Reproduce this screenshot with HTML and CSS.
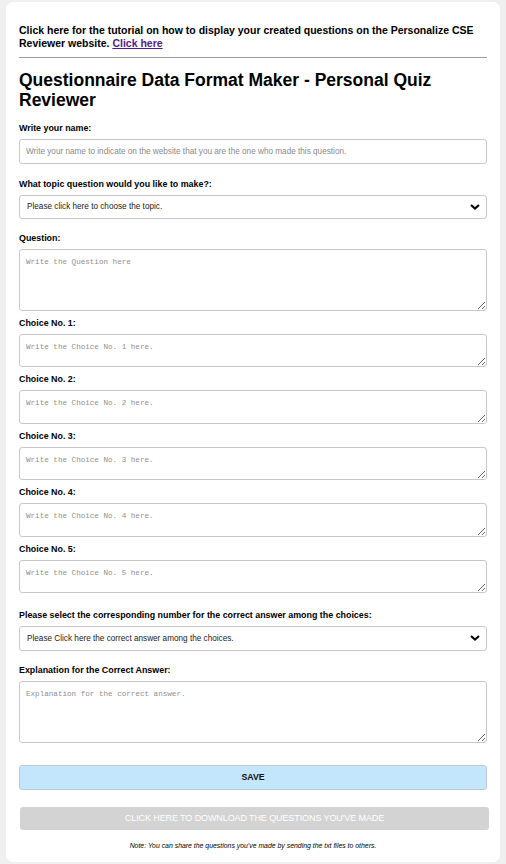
FILE: index.html
```html
<!DOCTYPE html>
<html lang="en">
<head>
<meta charset="utf-8">
<title>Questionnaire Data Format Maker</title>
<link rel="stylesheet" href="styles.css">
</head>
<body>
<main class="card">
  <p class="intro">Click here for the tutorial on how to display your created questions on the Personalize CSE Reviewer website. <a class="intro-link" href="#">Click here</a></p>
  <hr class="rule">
  <h1 class="title">Questionnaire Data Format Maker - Personal Quiz Reviewer</h1>

  <form class="form">
    <label class="label" for="name">Write your name:</label>
    <input class="input" id="name" type="text" placeholder="Write your name to indicate on the website that you are the one who made this question.">

    <label class="label gap-lg" for="topic">What topic question would you like to make?:</label>
    <div class="select-wrap">
      <select class="select" id="topic"><option>Please click here to choose the topic.</option></select>
      <svg class="chev" width="10" height="6" viewBox="0 0 10 6"><path d="M1 1 L5 4.6 L9 1" fill="none" stroke="#000" stroke-width="2"/></svg>
    </div>

    <label class="label gap-md" for="q">Question:</label>
    <textarea class="area area-lg" id="q" placeholder="Write the Question here"></textarea>

    <label class="label gap-sm" for="c1">Choice No. 1:</label>
    <textarea class="area area-sm" id="c1" placeholder="Write the Choice No. 1 here."></textarea>
    <label class="label gap-sm" for="c2">Choice No. 2:</label>
    <textarea class="area area-sm" id="c2" placeholder="Write the Choice No. 2 here."></textarea>
    <label class="label gap-sm" for="c3">Choice No. 3:</label>
    <textarea class="area area-sm" id="c3" placeholder="Write the Choice No. 3 here."></textarea>
    <label class="label gap-sm" for="c4">Choice No. 4:</label>
    <textarea class="area area-sm" id="c4" placeholder="Write the Choice No. 4 here."></textarea>
    <label class="label gap-sm" for="c5">Choice No. 5:</label>
    <textarea class="area area-sm" id="c5" placeholder="Write the Choice No. 5 here."></textarea>

    <label class="label gap-xl" for="ans">Please select the corresponding number for the correct answer among the choices:</label>
    <div class="select-wrap">
      <select class="select select-b" id="ans"><option>Please Click here the correct answer among the choices.</option></select>
      <svg class="chev" width="10" height="6" viewBox="0 0 10 6"><path d="M1 1 L5 4.6 L9 1" fill="none" stroke="#000" stroke-width="2"/></svg>
    </div>

    <label class="label gap-md" for="exp">Explanation for the Correct Answer:</label>
    <textarea class="area area-lg" id="exp" placeholder="Explanation for the correct answer."></textarea>

    <button class="btn-save" type="button">SAVE</button>
    <button class="btn-download" type="button">CLICK HERE TO DOWNLOAD THE QUESTIONS YOU'VE MADE</button>
    <p class="note">Note: You can share the questions you've made by sending the txt files to others.</p>
  </form>
</main>
</body>
</html>
```

FILE: styles.css
```css
html, body {
  margin: 0;
  padding: 0;
  background: #efefef;
}

body {
  font-family: "Liberation Sans", Arial, sans-serif;
  color: #000;
}

.card {
  margin: 2px 6px 0 6px;
  width: 494px;
  box-sizing: border-box;
  background: #fff;
  border-radius: 7px;
  padding: 22px 13px 12px 13px;
}

.intro {
  margin: 0;
  font-size: 10.5px;
  line-height: 12.5px;
  font-weight: bold;
}

.intro-link {
  color: #551a8b;
  text-decoration: underline;
}

.rule {
  margin: 8px 0 0 0;
  border: 0;
  border-top: 1.5px solid #9a9a9a;
  height: 0;
}

.title {
  margin: 12px 0 0 0;
  font-size: 17.5px;
  line-height: 20px;
  font-weight: bold;
}

.form {
  display: flex;
  flex-direction: column;
  margin-top: 12.5px;
}

.label {
  display: block;
  font-size: 8.9px;
  line-height: 11px;
  font-weight: bold;
  margin-bottom: 5px;
}

.gap-sm { margin-top: 7px; }
.gap-md { margin-top: 14px; }
.gap-lg { margin-top: 15px; }
.gap-xl { margin-top: 16.5px; }

.input {
  box-sizing: border-box;
  width: 468px;
  height: 25px;
  margin: 0;
  border: 1px solid #c8c8c8;
  border-radius: 3px;
  padding: 0 6px;
  font-family: "Liberation Sans", Arial, sans-serif;
  font-size: 8.2px;
  color: #333;
  outline: none;
}

.input::placeholder { color: #8a8a8a; }

.select-wrap {
  position: relative;
  width: 468px;
}

.select {
  box-sizing: border-box;
  width: 468px;
  height: 24px;
  margin: 0;
  border: 1px solid #c8c8c8;
  border-radius: 3px;
  padding: 0 20px 0 7px;
  background: #fff;
  font-family: "Liberation Sans", Arial, sans-serif;
  font-size: 8.2px;
  color: #222;
  appearance: none;
  -webkit-appearance: none;
  outline: none;
}

.select-b { height: 25px; }

.chev {
  position: absolute;
  right: 7px;
  top: 50%;
  margin-top: -3px;
  pointer-events: none;
}

.area {
  box-sizing: border-box;
  width: 468px;
  margin: 0;
  border: 1px solid #c8c8c8;
  border-radius: 3px;
  padding: 7px 6px;
  font-family: "Liberation Mono", "Courier New", monospace;
  font-size: 7.6px;
  line-height: 10px;
  color: #333;
  outline: none;
  resize: vertical;
}

.area::placeholder { color: #8f8f8f; }

.area-lg { height: 62px; }
.area-sm { height: 33.5px; }

.btn-save {
  box-sizing: border-box;
  width: 468px;
  height: 25px;
  margin: 22px 0 0 0;
  border: 1px solid #bdcad3;
  border-radius: 3px;
  background: #c3e6fc;
  font-family: "Liberation Sans", Arial, sans-serif;
  font-size: 8.75px;
  font-weight: bold;
  color: #111;
  padding: 0;
}

.btn-download {
  box-sizing: border-box;
  width: 469px;
  height: 23px;
  margin: 17px 0 0 1px;
  border: 0;
  border-radius: 3px;
  background: #d3d3d3;
  font-family: "Liberation Sans", Arial, sans-serif;
  font-size: 9px;
  letter-spacing: -0.1px;
  color: #fff;
  padding: 0;
}

.note {
  margin: 11px 0 0 0;
  text-align: center;
  font-size: 6.9px;
  line-height: 9px;
  font-style: italic;
}
```
